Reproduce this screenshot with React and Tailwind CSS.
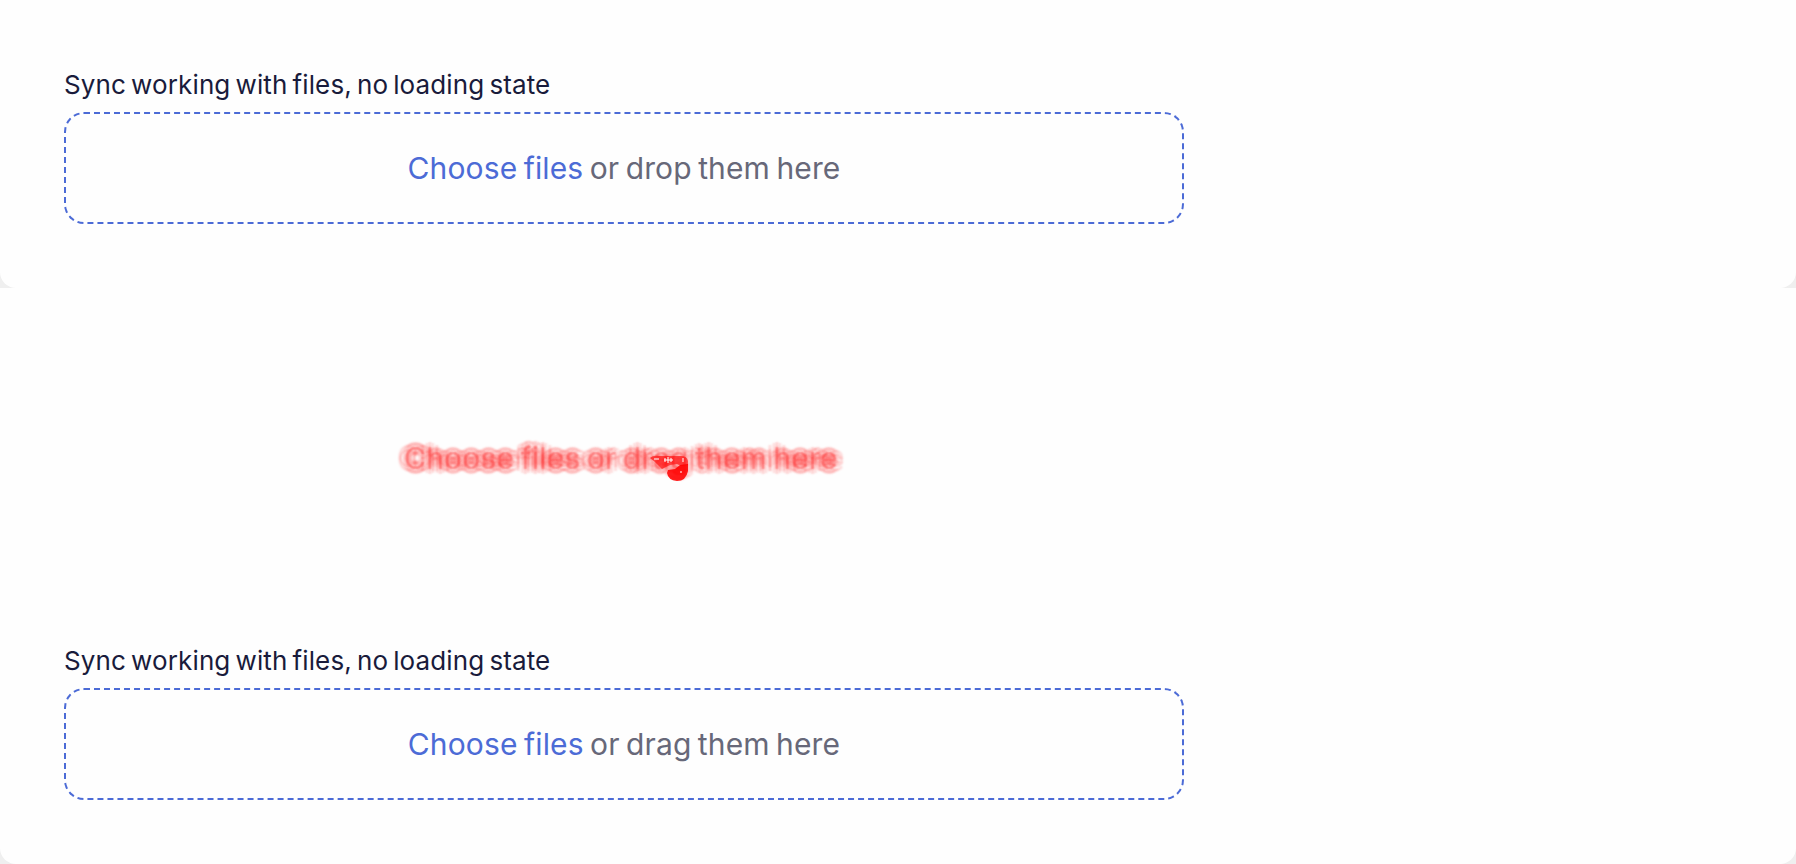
const spread = {
  textShadow: [
    [-8, -2, 0.16], [-8, 2, 0.16],
    [-4, -4, 0.15], [-4, 4, 0.15],
    [-1, -5, 0.2], [-1, 0, 0.5], [-1, 5, 0.2],
    [2, -4, 0.15], [2, 4, 0.15],
    [6, -2, 0.16], [6, 2, 0.16],
  ]
    .map(([x, y, alpha]) => `${x}px ${y}px 2px rgba(255,40,40,${alpha})`)
    .join(', '),
};

function Panel({ action }) {
  return (
    <section className="h-[288px] overflow-hidden bg-[#efefef]">
      <div className="h-full rounded-b-[16px] bg-[#fefefe] px-16 pt-[66px]">
        <p className="h-[46px] whitespace-nowrap text-[26px] leading-[38px] tracking-[0.13px] [word-spacing:-2.4px] text-[#191b3b]">
          Sync working with files, no loading state
        </p>
        <div className="flex h-[112px] w-[1120px] items-center justify-center rounded-[20px] border-2 border-dashed border-[#4c6bd6]">
          <p className="whitespace-nowrap text-[30px] leading-[40px] tracking-[0.14px] [word-spacing:-2.2px] text-[#676879]">
            <span className="text-[#4c6bd6]">Choose files</span> or {action} them here
          </p>
        </div>
      </div>
    </section>
  );
}

function Difference() {
  return (
    <section className="flex h-[288px] bg-[#fefefe] pl-[405px] pt-[150px]">
      <p
        className="h-10 whitespace-nowrap text-[30px] leading-[40px] tracking-[0.22px] [word-spacing:-2.4px] text-transparent"
        style={spread}
      >
        Choose files or dr
        <span className="relative">
          ag
          <svg className="absolute left-[-4px] top-[14px]" width="40" height="28" viewBox="0 0 40 28" fill="none">
            <path d="M0 4Q3 1 9 2L18 2H31Q37 2 38 7V11L31 12L27 10L20 11L12 15L5 8Z" fill="#f00" fillOpacity=".6" />
            <path d="M18 16L25 15L30 11L38 10V17Q36 27 27 27Q18 26 17 19Z" fill="#f00" fillOpacity=".88" />
            <path d="M4 5h5M15 4v4M18 3v6M21 4v4M14 6h9M33 4v4M30 18h2" stroke="#fff" />
          </svg>
        </span>{' '}
        them here
      </p>
    </section>
  );
}

export default function App() {
  return (
    <main className="h-[864px] w-[1796px] overflow-hidden bg-[#fefefe] font-['Inter',sans-serif]">
      <Panel action="drop" />
      <Difference />
      <Panel action="drag" />
    </main>
  );
}
